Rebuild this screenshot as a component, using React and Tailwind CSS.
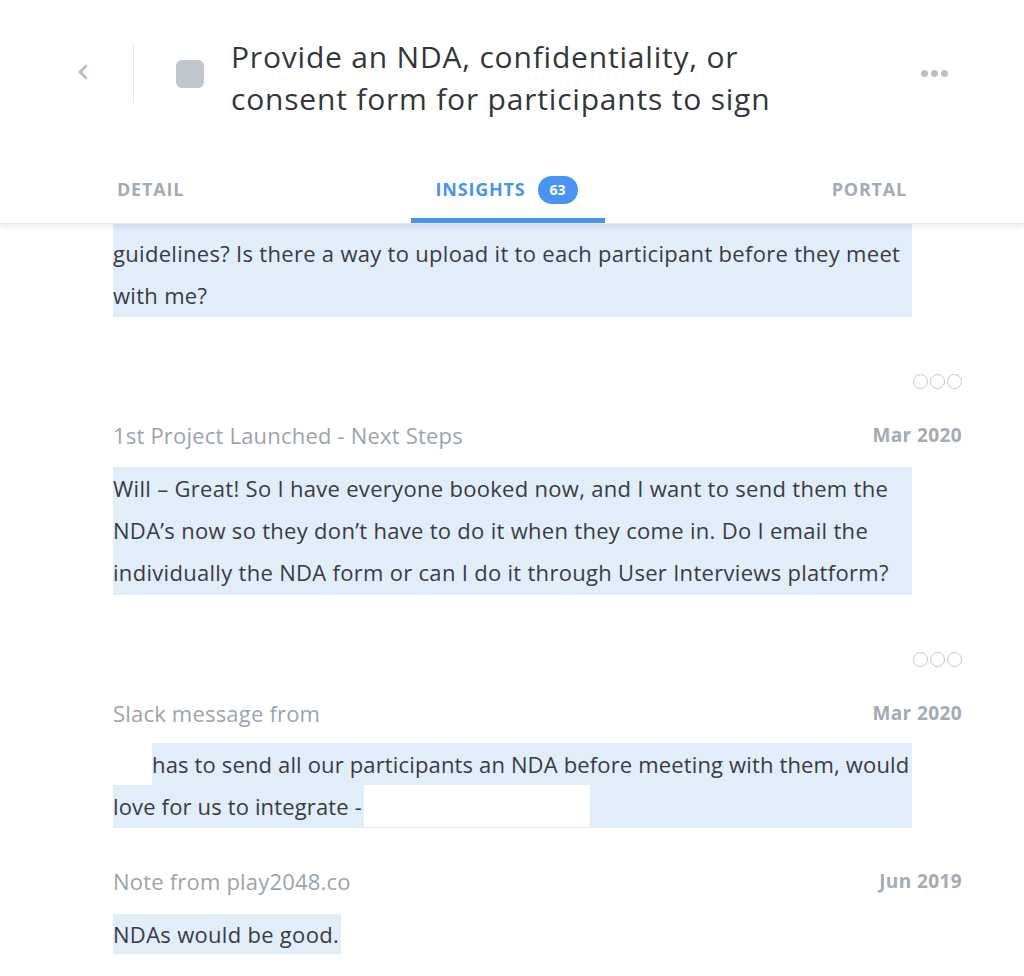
export default function App() {
  const font = { fontFamily: "'Open Sans', Lato, sans-serif" }
  return (
    <div className="w-[1024px] h-[976px] overflow-hidden bg-white" style={font}>
      {/* Header */}
      <header className="relative z-10 h-[224px] bg-white shadow-[0_3px_6px_rgba(0,0,0,0.08)] border-b border-[#e4e8ec]">
        <div className="flex items-start pt-[36px]">
          <div className="w-[133px] h-[72px] flex items-center pl-[76px]">
            <svg width="14" height="20" viewBox="0 0 14 20">
              <path d="M10 4 L4 10 L10 16" fill="none" stroke="#b3bac3" strokeWidth="2.6" strokeLinecap="round" strokeLinejoin="round" />
            </svg>
          </div>
          <div className="w-px h-[58px] mt-[9px] bg-[#e6e9ed]" />
          <div className="ml-[42px] mt-[24px] w-[28px] h-[28px] rounded-[6px] bg-[#bfc6ce]" />
          <h1 className="ml-[27px] text-[30px] leading-[42px] tracking-[0.8px] text-[#33373c] whitespace-nowrap">
            Provide an NDA, confidentiality, or<br />consent form for participants to sign
          </h1>
          <div className="ml-auto mr-[76px] mt-[34px] flex gap-[3px]">
            <span className="w-[7px] h-[7px] rounded-full bg-[#b9c0c8]" />
            <span className="w-[7px] h-[7px] rounded-full bg-[#b9c0c8]" />
            <span className="w-[7px] h-[7px] rounded-full bg-[#b9c0c8]" />
          </div>
        </div>
        <nav className="absolute left-0 right-0 bottom-0 h-[62px] flex text-[18px] font-bold tracking-[0.8px] uppercase">
          <div className="w-[411px] flex items-start pt-[15px] pl-[117px] text-[#a3abb4]">Detail</div>
          <div className="w-[194px] relative flex items-start justify-center pt-[15px] text-[#4a94f1]">
            <span className="ml-[-3px]">Insights</span>
            <span className="ml-[12px] h-[28px] px-[12px] rounded-full bg-[#4a94f1] text-white text-[14px] tracking-normal leading-[28px]">63</span>
            <span className="absolute left-0 right-0 bottom-0 h-[5px] bg-[#4a94f1]" />
          </div>
          <div className="flex-1 flex items-start justify-end pt-[15px] pr-[117px] text-[#a3abb4]">Portal</div>
        </nav>
      </header>

      {/* Insights */}
      <main className="pl-[113px] pr-[62px] text-[22px] leading-[42px] tracking-[0.3px] text-[#383c42] whitespace-nowrap">
        <p className="w-[799px] bg-[#e2edfa] pt-[8px] pb-[1px]">
          guidelines? Is there a way to upload it to each participant before they meet<br />with me?
        </p>

        <Dots className="mt-[55px]" />
        <Meta className="mt-[24px]" title="1st Project Launched - Next Steps" date="Mar 2020" />
        <p className="mt-[11px] w-[799px] bg-[#e2edfa] pb-[2px]">
          Will – Great! So I have everyone booked now, and I want to send them the<br />
          NDA’s now so they don’t have to do it when they come in. Do I email the<br />
          individually the NDA form or can I do it through User Interviews platform?
        </p>

        <Dots className="mt-[55px]" />
        <Meta className="mt-[24px]" title="Slack message from" date="Mar 2020" />
        <p className="mt-[9px] w-[799px] bg-[#e2edfa] pb-[1px] tracking-[0.15px]">
          <span className="inline-block align-top w-[39px] h-[42px] bg-white" />
          has to send all our participants an NDA before meeting with them, would<br />
          love for us to integrate -
          <span className="inline-block align-top w-[226px] h-[42px] bg-white ml-[2px]" />
        </p>

        <Meta className="mt-[32px]" title="Note from play2048.co" date="Jun 2019" />
        <p className="mt-[11px]">
          <span className="inline-block bg-[#e2edfa] pr-[2px] leading-[40px]">NDAs would be good.</span>
        </p>
      </main>
    </div>
  )
}

function Dots({ className }) {
  return (
    <div className={`flex justify-end gap-[2px] h-[18px] items-center ${className}`}>
      <span className="w-[15px] h-[15px] rounded-full border-[1.5px] border-[#c3c9d0]" />
      <span className="w-[15px] h-[15px] rounded-full border-[1.5px] border-[#c3c9d0]" />
      <span className="w-[15px] h-[15px] rounded-full border-[1.5px] border-[#c3c9d0]" />
    </div>
  )
}

function Meta({ className, title, date }) {
  return (
    <div className={`flex justify-between items-center h-[42px] ${className}`}>
      <span className="text-[22px] tracking-[0.2px] text-[#9ba4ae]">{title}</span>
      <span className="text-[19px] font-bold tracking-[0.4px] text-[#a3abb4]">{date}</span>
    </div>
  )
}
